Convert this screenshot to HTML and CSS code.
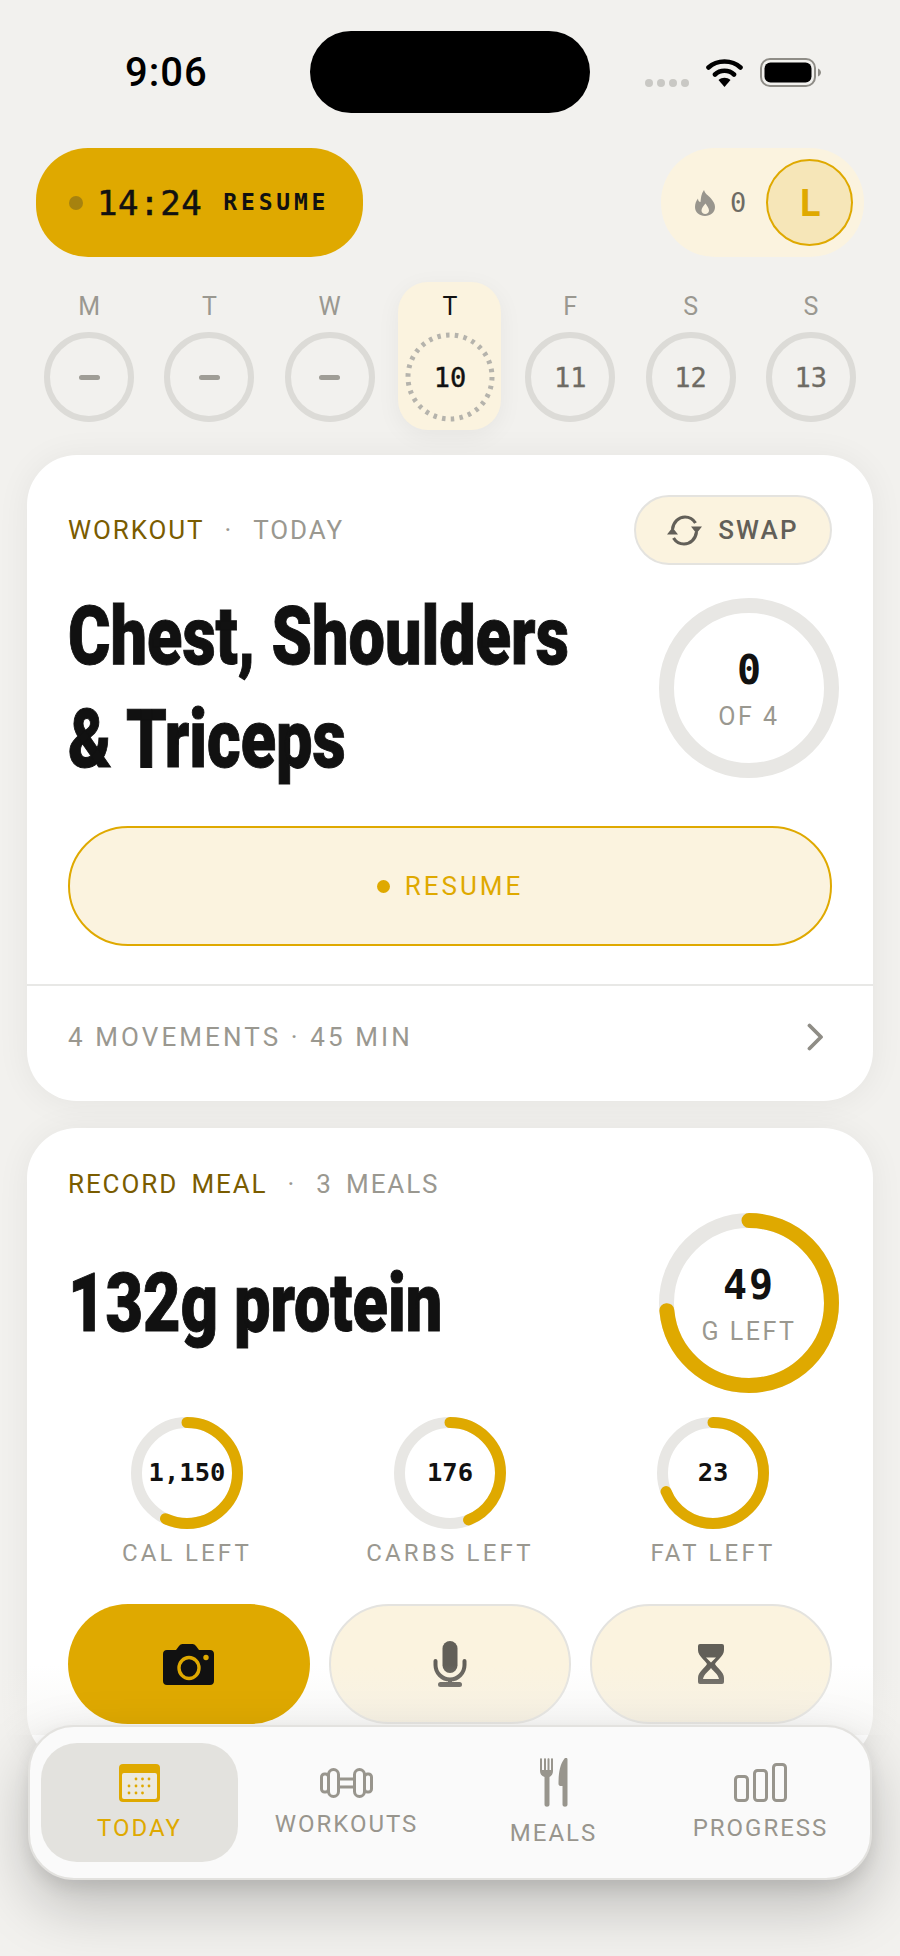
FILE: index.html
```html
<!DOCTYPE html>
<html lang="en">
<head>
<meta charset="utf-8">
<title>Today</title>
<link rel="stylesheet" href="styles.css">
</head>
<body>
<div class="screen">
  <header class="status">
    <div class="clock">9:06</div>
    <div class="island"></div>
    <div class="status-icons">
      <div class="signal"><i></i><i></i><i></i><i></i></div>
      <svg class="wifi" width="37" height="29" viewBox="0 0 37 29"><path d="M2.500 9.500C11 1.500 26 1.500 34.500 9.500M9 16.500C14 11.500 23 11.500 28 16.500" fill="none" stroke="#000" stroke-width="4.600" stroke-linecap="round"/><path d="M12.500 22C16 19 21 19 24.500 22L18.500 29z" fill="#000"/></svg>
      <svg class="battery" width="62" height="30" viewBox="0 0 62 30"><rect x="1" y="1" width="54" height="27" rx="9" fill="none" stroke="#8f8d87" stroke-width="2"/><rect x="4.500" y="4.500" width="47" height="20" rx="6" fill="#000"/><path d="M58 10.500c2 1 3 2.500 3 4s-1 3-3 4z" fill="#8f8d87"/></svg>
    </div>
  </header>

  <section class="topbar">
    <div class="timer-pill">
      <span class="timer-dot"></span>
      <span class="timer-time">14:24</span>
      <span class="timer-label">RESUME</span>
    </div>
    <div class="streak-pill">
      <svg class="flame" width="20" height="26" viewBox="0 0 20 26"><path fill-rule="evenodd" fill="#98958d" d="M9 0c1 4 4 5 7 8.500 2.500 3 4 5.500 4 8.500 0 5.500-4.500 9-10 9S0 22.500 0 17c0-3 1-6 3-8.500 0 2 1 3.500 2.500 3.500C6 8 6 4 9 0zM10.500 13.500c-2 2.500-4 4.500-4 7 0 2 1.700 3.500 3.700 3.500s3.800-1.500 3.800-3.500c0-2.500-2-4.500-3.500-7z"/></svg>
      <span class="streak-count">0</span>
      <span class="avatar">L</span>
    </div>
  </section>

  <section class="days">
    <div class="day"><span class="day-letter">M</span><span class="day-circle"><b class="dash"></b></span></div>
    <div class="day"><span class="day-letter">T</span><span class="day-circle"><b class="dash"></b></span></div>
    <div class="day"><span class="day-letter">W</span><span class="day-circle"><b class="dash"></b></span></div>
    <div class="day day-today">
      <span class="day-letter">T</span>
      <span class="day-circle day-circle-today">
        <svg class="today-ring" width="90" height="90" viewBox="0 0 90 90"><circle cx="45" cy="45" r="42" fill="none" stroke="#b5b3ac" stroke-width="5" stroke-dasharray="3.500 5.300"/></svg>
        10
      </span>
    </div>
    <div class="day"><span class="day-letter">F</span><span class="day-circle">11</span></div>
    <div class="day"><span class="day-letter">S</span><span class="day-circle">12</span></div>
    <div class="day"><span class="day-letter">S</span><span class="day-circle">13</span></div>
  </section>

  <article class="card card-workout">
    <div class="card-body">
      <div class="card-head">
        <div class="eyebrow"><span class="eyebrow-main">WORKOUT</span><span class="eyebrow-dot">·</span><span class="eyebrow-sub">TODAY</span></div>
        <button class="swap">
          <svg width="35" height="31" viewBox="0 0 35 31"><path d="M5.500 14C6.500 7 11.500 2 18 2c4.500 0 8 2 10.500 6M29.500 17C28.500 24 23.500 29 17 29c-4.500 0-8-2-10.500-6" fill="none" stroke="#625f58" stroke-width="3.200"/><path d="M24 11.500h11l-5.500 7zM0 19.500h11l-5.500-7z" fill="#625f58"/></svg>
          <span>SWAP</span>
        </button>
      </div>
      <div class="hero">
        <h1 class="title"><span>Chest, Shoulders</span><span>&amp; Triceps</span></h1>
        <div class="ring-big">
          <svg width="180" height="180" viewBox="0 0 180 180"><circle cx="90" cy="90" r="82.500" fill="none" stroke="#e8e7e4" stroke-width="15"/></svg>
          <div class="ring-text"><b>0</b><span>OF 4</span></div>
        </div>
      </div>
      <button class="resume"><i></i><span>RESUME</span></button>
    </div>
    <div class="card-foot">
      <span>4 MOVEMENTS · 45 MIN</span>
      <svg width="17" height="28" viewBox="0 0 17 28"><path d="M2.500 2.500 14 14 2.500 25.500" fill="none" stroke="#8f8d86" stroke-width="3.800" stroke-linecap="round" stroke-linejoin="round"/></svg>
    </div>
  </article>

  <article class="card card-meal">
    <div class="eyebrow eyebrow-meal"><span class="eyebrow-main">RECORD MEAL</span><span class="eyebrow-dot">·</span><span class="eyebrow-sub">3 MEALS</span></div>
    <div class="hero hero-meal">
      <h2 class="title"><span>132g protein</span></h2>
      <div class="ring-big">
        <svg width="180" height="180" viewBox="0 0 180 180"><circle cx="90" cy="90" r="82.500" fill="none" stroke="#e8e7e4" stroke-width="15"/><circle class="arc" cx="90" cy="90" r="82.500" fill="none" stroke="#dfa900" stroke-width="15" stroke-linecap="round" pathLength="100" stroke-dasharray="73.500 100" transform="rotate(-90 90 90)"/></svg>
        <div class="ring-text"><b class="num-wide">49</b><span>G LEFT</span></div>
      </div>
    </div>
    <div class="macros">
      <div class="macro">
        <div class="ring-small">
          <svg width="112" height="112" viewBox="0 0 112 112"><circle cx="56" cy="56" r="50.500" fill="none" stroke="#e8e7e4" stroke-width="11"/><circle cx="56" cy="56" r="50.500" fill="none" stroke="#dfa900" stroke-width="11" stroke-linecap="round" pathLength="100" stroke-dasharray="57 100" transform="rotate(-90 56 56)"/></svg>
          <b>1,150</b>
        </div>
        <span>CAL LEFT</span>
      </div>
      <div class="macro">
        <div class="ring-small">
          <svg width="112" height="112" viewBox="0 0 112 112"><circle cx="56" cy="56" r="50.500" fill="none" stroke="#e8e7e4" stroke-width="11"/><circle cx="56" cy="56" r="50.500" fill="none" stroke="#dfa900" stroke-width="11" stroke-linecap="round" pathLength="100" stroke-dasharray="44 100" transform="rotate(-90 56 56)"/></svg>
          <b>176</b>
        </div>
        <span>CARBS LEFT</span>
      </div>
      <div class="macro">
        <div class="ring-small">
          <svg width="112" height="112" viewBox="0 0 112 112"><circle cx="56" cy="56" r="50.500" fill="none" stroke="#e8e7e4" stroke-width="11"/><circle cx="56" cy="56" r="50.500" fill="none" stroke="#dfa900" stroke-width="11" stroke-linecap="round" pathLength="100" stroke-dasharray="69 100" transform="rotate(-90 56 56)"/></svg>
          <b>23</b>
        </div>
        <span>FAT LEFT</span>
      </div>
    </div>
    <div class="actions">
      <button class="action action-primary">
        <svg width="52" height="41" viewBox="0 0 52 41"><path fill="#111" d="M4 6h9l3-4c1-1.300 2-2 3.500-2h10c1.500 0 2.500.700 3.500 2l3 4h11c2.500 0 4 1.500 4 4v27c0 2.500-1.500 4-4 4H4c-2.500 0-4-1.500-4-4V10c0-2.500 1.500-4 4-4z"/><ellipse cx="26" cy="24" rx="10" ry="10.500" fill="none" stroke="#dfa900" stroke-width="3.400"/><circle cx="43" cy="13.500" r="2.700" fill="#dfa900"/></svg>
      </button>
      <button class="action">
        <svg width="34" height="46" viewBox="0 0 34 46"><rect x="9.500" y="0" width="15" height="32" rx="7.500" fill="#625f58"/><path d="M2.500 20v4a14.500 14.500 0 0 0 29 0v-4" fill="none" stroke="#625f58" stroke-width="4" stroke-linecap="round"/><rect x="15" y="37" width="4" height="6" fill="#625f58"/><rect x="5" y="41" width="24" height="5" rx="2.500" fill="#625f58"/></svg>
      </button>
      <button class="action">
        <svg width="26" height="40" viewBox="0 0 26 40"><path fill="#625f58" fill-rule="evenodd" d="M2 0h22a2 2 0 0 1 2 2v4c0 6-7 10-9 14 2 4 9 8 9 14v4a2 2 0 0 1-2 2H2a2 2 0 0 1-2-2v-4c0-6 7-10 9-14C7 16 0 12 0 6V2a2 2 0 0 1 2-2zM8 13.500h10l-5 5zM13 24c-2 3-7 6-8 11h16c-1-5-6-8-8-11z"/></svg>
      </button>
    </div>
  </article>

  <div class="fade"></div>

  <nav class="tabbar">
    <a class="tab tab-active">
      <svg width="41" height="38" viewBox="0 0 41 38"><rect x="0" y="0" width="41" height="38" rx="4" fill="#dfa900"/><rect x="3" y="9" width="35" height="26" rx="2" fill="#ece9de"/><g fill="#dfa900"><circle cx="17" cy="15" r="1.400"/><circle cx="23.500" cy="15" r="1.400"/><circle cx="30" cy="15" r="1.400"/><circle cx="10" cy="22" r="1.400"/><circle cx="17" cy="22" r="1.400"/><circle cx="23.500" cy="22" r="1.400"/><circle cx="30" cy="22" r="1.400"/><circle cx="10" cy="29" r="1.400"/><circle cx="17" cy="29" r="1.400"/><circle cx="23.500" cy="29" r="1.400"/></g></svg>
      <span>TODAY</span>
    </a>
    <a class="tab">
      <svg width="53" height="30" viewBox="0 0 53 30"><g fill="none" stroke="#98958d" stroke-width="3"><rect x="1.500" y="6" width="7" height="18" rx="3"/><rect x="8.500" y="1.500" width="10" height="27" rx="5"/><rect x="18.500" y="11" width="16" height="8"/><rect x="34.500" y="1.500" width="10" height="27" rx="5"/><rect x="44.500" y="6" width="7" height="18" rx="3"/></g></svg>
      <span>WORKOUTS</span>
    </a>
    <a class="tab">
      <svg width="28" height="49" viewBox="0 0 28 49"><path fill="#98958d" d="M0 1c0-1 2-1 2 0v11h2V1c0-1 2-1 2 0v11h1.500V1c0-1 2-1 2 0v11h1.500V1c0-1 2-1 2 0v12c0 3-1.500 5-3.500 6v27.500c0 3-5 3-5 0V19C1.500 18 0 16 0 13zM27.500 1.500V46.500c0 3-5 3-5 0V28h-2c-1 0-2-1-2-2 0-10 1-19 6-25.500 1-1.200 3-1 3 1z"/></svg>
      <span>MEALS</span>
    </a>
    <a class="tab">
      <svg width="53" height="39" viewBox="0 0 53 39"><g fill="none" stroke="#98958d" stroke-width="3"><rect x="1.500" y="13.500" width="12" height="24" rx="3"/><rect x="20.500" y="7.500" width="12" height="30" rx="3"/><rect x="39.500" y="1.500" width="12" height="36" rx="3"/></g></svg>
      <span>PROGRESS</span>
    </a>
  </nav>
</div>
</body>
</html>
```

FILE: styles.css
```css
* { box-sizing: border-box; }
html, body { margin: 0; padding: 0; }
body { background: #f2f1ee; font-family: "Roboto", "Liberation Sans", sans-serif; color: #111; }
button { font: inherit; padding: 0; cursor: pointer; }

.screen { position: relative; width: 900px; height: 1956px; overflow: hidden; background: #f2f1ee; }

/* status bar */
.status { display: grid; grid-template-columns: 310px 280px 310px; height: 148px; padding-top: 31px; }
.clock { font: 500 40px/1 "Roboto", sans-serif; letter-spacing: 1px; text-align: left; padding: 22px 0 0 125px; color: #000; }
.island { width: 280px; height: 82px; border-radius: 41px; background: #000; }
.status-icons { position: relative; display: flex; align-items: flex-start; padding: 27px 0 0 55px; }
.signal { display: flex; gap: 4px; margin-top: 21px; }
.signal i { width: 8px; height: 8px; border-radius: 50%; background: #c9c8c4; }
.wifi { margin-left: 17px; }
.battery { margin-left: 17px; }

/* top row */
.topbar { display: flex; justify-content: space-between; height: 109px; padding: 0 36px; }
.timer-pill { display: flex; align-items: center; width: 327px; height: 109px; border-radius: 52px; background: #dfa900; padding-left: 33px; }
.timer-dot { width: 14px; height: 14px; border-radius: 50%; background: #a6820f; }
.timer-time { font: 400 34px/1 "DejaVu Sans Mono", monospace; letter-spacing: .6px; -webkit-text-stroke: .5px #111; margin-left: 14px; color: #111; }
.timer-label { font: 700 23px/1 "DejaVu Sans Mono", monospace; letter-spacing: 3.800px; margin-left: 21px; color: #111; }
.streak-pill { display: flex; align-items: center; width: 203px; height: 109px; border-radius: 54px; background: #fbf3df; padding-left: 34px; }
.streak-count { font: 500 27px/1 "DejaVu Sans Mono", monospace; color: #6e6b64; margin-left: 15px; }
.avatar { display: flex; align-items: center; justify-content: center; width: 87px; height: 87px; margin-left: 20px; border-radius: 50%; border: 2px solid #dfa900; background: #f6e6b8; color: #dfa900; font: 700 38px/1 "DejaVu Sans Mono", monospace; }

/* week */
.days { display: grid; grid-template-columns: repeat(7, 1fr); margin-top: 25px; padding: 0 29px; }
.day { display: flex; flex-direction: column; align-items: center; height: 148px; padding-top: 10px; }
.day-letter { height: 30px; margin-bottom: 10px; font: 400 25px/30px "Roboto", sans-serif; color: #9a9890; }
.day-circle { position: relative; display: flex; align-items: center; justify-content: center; width: 90px; height: 90px; border-radius: 50%; border: 6px solid #dcdbd7; font: 400 27px/1 "DejaVu Sans Mono", monospace; -webkit-text-stroke: .3px #6e6b64; color: #6e6b64; }
.dash { width: 21px; height: 5px; border-radius: 3px; background: #9f9d96; }
.day-today { width: 103px; justify-self: center; border-radius: 30px; background: #fbf3df; box-shadow: 0 6px 24px rgba(0, 0, 0, .05); }
.day-today .day-letter { color: #111; }
.day-circle-today { border: 0; color: #111; -webkit-text-stroke: .4px #111; }
.today-ring { position: absolute; left: 0; top: 0; }

/* cards */
.card { margin: 25px 27px 0; border-radius: 50px; background: #fff; box-shadow: 0 2px 34px rgba(0, 0, 0, .06); }
.card-workout { padding-bottom: 13px; }
.card-body { padding: 40px 41px 38px; border-bottom: 2px solid #e8e8e6; }
.card-head { display: flex; align-items: center; justify-content: space-between; height: 70px; }
.eyebrow { display: flex; align-items: center; font: 400 26px/32px "Roboto", sans-serif; letter-spacing: 1.900px; word-spacing: 5px; }
.eyebrow-main { color: #7a5c00; }
.eyebrow-dot { margin: 0 20px; color: #9a9890; }
.eyebrow-sub { color: #9a9890; }
.swap { display: flex; align-items: center; justify-content: center; gap: 16px; width: 198px; height: 70px; border-radius: 35px; border: 2px solid #e4e3df; background: #fbf3df; color: #625f58; font: 500 26px/1 "Roboto", sans-serif; letter-spacing: 2.200px; }

.hero { display: flex; align-items: center; justify-content: space-between; height: 180px; margin: 33px -7px 0 0; }
.title { flex: 1; min-width: 0; display: flex; flex-direction: column; margin: 0; font: 900 82px/103px "Roboto", sans-serif; color: #111; -webkit-text-stroke: 1px #111; transform: scaleX(.79); transform-origin: left center; white-space: nowrap; }
.ring-big { position: relative; flex: none; width: 180px; height: 180px; }
.ring-text { position: absolute; left: 0; right: 0; top: 0; bottom: 0; display: flex; flex-direction: column; align-items: center; justify-content: center; padding-top: 3px; }
.ring-text b { font: 700 40px/46px "DejaVu Sans Mono", monospace; color: #111; }
.ring-text span { margin-top: 9px; font: 400 25px/30px "Roboto", sans-serif; letter-spacing: 2.500px; color: #9a9890; }
.ring-text .num-wide { letter-spacing: 2px; }

.resume { display: flex; align-items: center; justify-content: center; gap: 15px; width: 100%; height: 120px; margin-top: 48px; border-radius: 60px; border: 2px solid #dfa900; background: #fbf3df; color: #dfa900; font: 400 26px/1 "Roboto", sans-serif; letter-spacing: 3px; }
.resume i { width: 13px; height: 13px; border-radius: 50%; background: #dfa900; }
.card-foot { display: flex; align-items: center; justify-content: space-between; height: 102px; padding: 0 49px 0 41px; font: 400 26px/1 "Roboto", sans-serif; letter-spacing: 3.100px; color: #9a9890; }

.card-meal { margin-top: 27px; padding: 40px 41px; }
.hero-meal { margin-top: 13px; }
.macros { display: grid; grid-template-columns: repeat(3, 237px); gap: 26px; justify-content: center; margin-top: 24px; }
.macro { display: flex; flex-direction: column; align-items: center; }
.macro > span { margin-top: 9px; font: 400 24px/30px "Roboto", sans-serif; letter-spacing: 3.200px; color: #9a9890; }
.ring-small { position: relative; display: flex; align-items: center; justify-content: center; width: 112px; height: 112px; }
.ring-small svg { position: absolute; left: 0; top: 0; }
.ring-small b { position: relative; font: 700 25.500px/1 "DejaVu Sans Mono", monospace; color: #111; }
.actions { display: grid; grid-template-columns: repeat(3, 1fr); gap: 19px; margin-top: 36px; }
.action { display: flex; align-items: center; justify-content: center; height: 120px; border-radius: 60px; border: 2px solid #e4e3df; background: #fbf3df; }
.action-primary { position: relative; z-index: 2; border: 0; background: #dfa900; }

/* floating */
.fade { position: absolute; z-index: 1; left: 0; right: 0; top: 1665px; height: 70px; background: linear-gradient(to bottom, rgba(242, 241, 238, 0), rgba(242, 241, 238, .5)); pointer-events: none; }
.tabbar { position: absolute; z-index: 3; left: 28px; top: 1725px; width: 844px; height: 155px; display: grid; grid-template-columns: repeat(4, 207px); padding: 16px 6px; border-radius: 46px; border: 2px solid #e3e2df; background: #fafafa; box-shadow: 0 26px 60px rgba(0, 0, 0, .22), 0 8px 16px rgba(0, 0, 0, .08); }
.tab { display: flex; flex-direction: column; align-items: center; justify-content: center; gap: 12px; width: 197px; border-radius: 36px; font: 400 24px/28px "Roboto", sans-serif; letter-spacing: 2px; color: #98958d; justify-self: center; }
.tab-active { background: #e3e2de; color: #dfa900; }
```
